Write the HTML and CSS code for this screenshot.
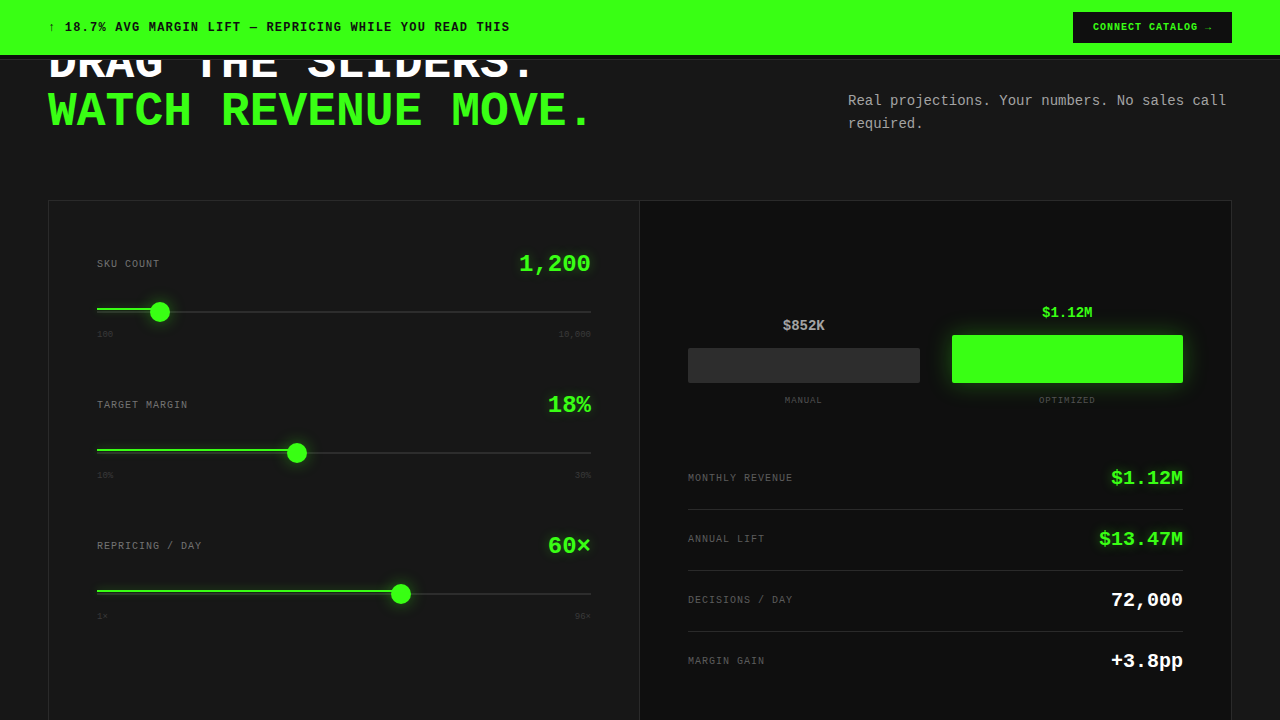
FILE: index.html
```
<!DOCTYPE html>
<html lang="en">
<head>
    <meta charset="UTF-8">
    <meta name="viewport" content="width=device-width, initial-scale=1.0">
    <title>Revenue Simulator</title>
    <link rel="stylesheet" href="styles.css">
</head>
<body>
    <div class="topbar">
        <div class="banner">
            <p class="banner-text">↑ 18.7% AVG MARGIN LIFT — REPRICING WHILE YOU READ THIS</p>
            <button type="button" class="banner-btn">CONNECT CATALOG →</button>
        </div>
    </div>

    <section class="simulator">
        <header class="section-header">
            <h2>DRAG THE SLIDERS.<br><span class="accent">WATCH REVENUE MOVE.</span></h2>
            <p class="intro">Real projections. Your numbers. No sales call required.</p>
        </header>

        <div class="panel">
            <form class="controls">
                <div class="control">
                    <div class="control-head">
                        <label for="sku">SKU COUNT</label>
                        <output id="skuValue" for="sku">1,200</output>
                    </div>
                    <div class="slider">
                        <input type="range" id="sku" min="100" max="10000" step="100" value="1200">
                        <div class="fill" style="width: 11.1%"></div>
                    </div>
                    <div class="limits"><span>100</span><span>10,000</span></div>
                </div>

                <div class="control">
                    <div class="control-head">
                        <label for="margin">TARGET MARGIN</label>
                        <output id="marginValue" for="margin">18%</output>
                    </div>
                    <div class="slider">
                        <input type="range" id="margin" min="10" max="30" value="18">
                        <div class="fill" style="width: 40%"></div>
                    </div>
                    <div class="limits"><span>10%</span><span>30%</span></div>
                </div>

                <div class="control">
                    <div class="control-head">
                        <label for="reprice">REPRICING / DAY</label>
                        <output id="repriceValue" for="reprice">60×</output>
                    </div>
                    <div class="slider">
                        <input type="range" id="reprice" min="1" max="96" value="60">
                        <div class="fill" style="width: 62.1%"></div>
                    </div>
                    <div class="limits"><span>1×</span><span>96×</span></div>
                </div>
            </form>

            <div class="results">
                <div class="chart">
                    <div class="chart-col">
                        <span class="chart-value">$852K</span>
                        <div class="bar" style="height: 35px"></div>
                        <span class="chart-label">MANUAL</span>
                    </div>
                    <div class="chart-col optimized">
                        <span class="chart-value">$1.12M</span>
                        <div class="bar" style="height: 48px"></div>
                        <span class="chart-label">OPTIMIZED</span>
                    </div>
                </div>

                <dl class="stats">
                    <div class="stat highlight">
                        <dt>MONTHLY REVENUE</dt>
                        <dd>$1.12M</dd>
                    </div>
                    <div class="stat highlight">
                        <dt>ANNUAL LIFT</dt>
                        <dd>$13.47M</dd>
                    </div>
                    <div class="stat">
                        <dt>DECISIONS / DAY</dt>
                        <dd id="decisions">72,000</dd>
                    </div>
                    <div class="stat">
                        <dt>MARGIN GAIN</dt>
                        <dd>+3.8pp</dd>
                    </div>
                </dl>
            </div>
        </div>
    </section>

    <script>
        const sku = document.getElementById('sku');
        const margin = document.getElementById('margin');
        const reprice = document.getElementById('reprice');

        function update(e) {
            const input = e.target;
            const percent = (input.value - input.min) / (input.max - input.min) * 100;
            input.nextElementSibling.style.width = percent + '%';

            document.getElementById('skuValue').textContent = Number(sku.value).toLocaleString('en-US');
            document.getElementById('marginValue').textContent = margin.value + '%';
            document.getElementById('repriceValue').textContent = reprice.value + '×';
            document.getElementById('decisions').textContent = (sku.value * reprice.value).toLocaleString('en-US');
        }

        [sku, margin, reprice].forEach((input) => input.addEventListener('input', update));
    </script>
</body>
</html>
```
FILE: styles.css
```
* {
    box-sizing: border-box;
    margin: 0;
    padding: 0;
}
body {
    font-family: "Liberation Mono", "Courier New", monospace;
    background: #171717;
    color: #fff;
}
button {
    font-family: inherit;
    cursor: pointer;
}
.topbar {
    position: fixed;
    top: 0;
    left: 0;
    right: 0;
    z-index: 10;
    padding-bottom: 4px;
    background: #0d0f0d;
    border-bottom: 1px solid #2a2a2a;
}
.banner {
    display: flex;
    justify-content: space-between;
    align-items: center;
    padding: 12px 48px;
    background: #39ff14;
    color: #0f0f0f;
}
.banner-text {
    font-size: 12px;
    font-weight: bold;
    letter-spacing: 0.1em;
}
.banner-btn {
    padding: 10px 20px;
    border: none;
    background: #0f0f0f;
    color: #39ff14;
    font-size: 10px;
    font-weight: bold;
    line-height: 11px;
    letter-spacing: 0.1em;
}
.simulator {
    padding: 40px 48px 96px;
}
.section-header {
    display: flex;
    justify-content: space-between;
    align-items: flex-end;
    margin-bottom: 64px;
}
h2 {
    font-size: 48px;
    line-height: 48px;
}
.accent {
    color: #39ff14;
}
.intro {
    max-width: 384px;
    font-size: 14px;
    line-height: 23px;
    color: #a3a3a3;
}
.panel {
    display: grid;
    grid-template-columns: 1fr 1fr;
    border: 1px solid #2a2a2a;
}
.controls {
    display: flex;
    flex-direction: column;
    gap: 48px;
    padding: 48px;
    border-right: 1px solid #2a2a2a;
}
.control-head {
    display: flex;
    justify-content: space-between;
    align-items: center;
    margin-bottom: 20px;
    line-height: 32px;
}
.control-head label {
    font-size: 10px;
    letter-spacing: 0.1em;
    color: #737373;
}
.control-head output {
    font-size: 24px;
    font-weight: bold;
    color: #39ff14;
    text-shadow: 0 0 12px rgba(57, 255, 20, 0.3);
}
.slider {
    position: relative;
    display: flex;
    align-items: center;
    height: 22px;
}
.slider input {
    -webkit-appearance: none;
    appearance: none;
    width: 100%;
    height: 2px;
    background: #2d2d2d;
    outline: none;
    cursor: pointer;
}
.slider input::-webkit-slider-thumb {
    -webkit-appearance: none;
    width: 20px;
    height: 20px;
    border-radius: 50%;
    background: #39ff14;
    box-shadow: 0 0 16px rgba(57, 255, 20, 0.4);
}
.fill {
    position: absolute;
    top: 7px;
    left: 0;
    height: 2px;
    background: #39ff14;
    box-shadow: 0 0 8px rgba(57, 255, 20, 0.4);
    pointer-events: none;
}
.limits {
    display: flex;
    justify-content: space-between;
    margin-top: 6px;
    font-size: 9px;
    line-height: 13px;
    color: #3a3a3a;
}
.results {
    padding: 48px;
    background: #0f0f0f;
}
.chart {
    display: flex;
    align-items: flex-end;
    gap: 32px;
    min-height: 158px;
    margin-bottom: 42px;
}
.chart-col {
    flex: 1;
    display: flex;
    flex-direction: column;
    gap: 12px;
    text-align: center;
}
.chart-value {
    font-size: 14px;
    font-weight: bold;
    line-height: 20px;
    color: #a3a3a3;
}
.chart-label {
    font-size: 9px;
    line-height: 12px;
    letter-spacing: 0.1em;
    color: #525252;
}
.bar {
    background: #2d2d2d;
    border-radius: 2px;
}
.optimized .chart-value {
    color: #39ff14;
}
.optimized .bar {
    background: #39ff14;
    box-shadow: 0 0 24px rgba(57, 255, 20, 0.3);
}
.stat {
    display: flex;
    justify-content: space-between;
    align-items: center;
    line-height: 60px;
    border-bottom: 1px solid #2a2a2a;
}
.stat:last-child {
    border-bottom: none;
}
.stat dt {
    font-size: 10px;
    letter-spacing: 0.1em;
    color: #5c5c5c;
}
.stat dd {
    font-size: 20px;
    font-weight: bold;
}
.highlight dd {
    color: #39ff14;
    text-shadow: 0 0 12px rgba(57, 255, 20, 0.4);
}
```
